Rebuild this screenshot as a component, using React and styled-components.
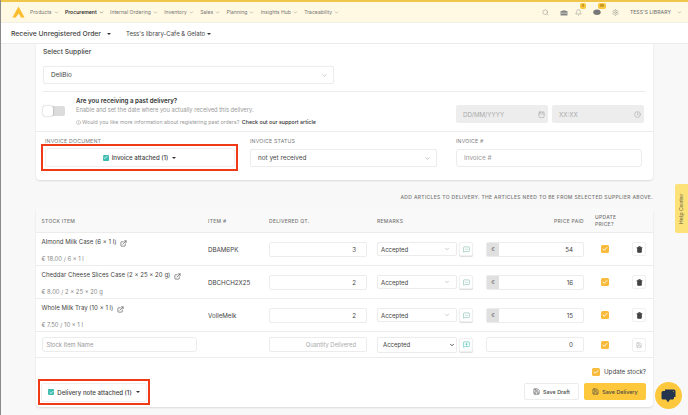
import React from 'react'
import styled, { createGlobalStyle } from 'styled-components'
import {
  Search,
  Bell,
  Settings,
  ChevronDown,
  Calendar,
  Clock,
  Info,
  ExternalLink,
  Check,
  Trash2,
  Save,
  MessageSquarePlus,
  MessageSquareMore,
} from 'lucide-react'

const GlobalStyle = createGlobalStyle`
  html, body {
    margin: 0;
    padding: 0;
    background: #f8f8f8;
  }
  * {
    box-sizing: border-box;
  }
  body {
    font-family: Inter, "Open Sans", sans-serif;
    color: #3c3c3c;
  }
`

const Page = styled.div`
  position: relative;
  width: 688px;
  height: 415px;
  overflow: hidden;
  background: #f8f8f8;
  border-left: 1px solid #8a8a8a;
`

const TopBar = styled.header`
  display: flex;
  align-items: center;
  height: 23px;
  padding: 0 6px 0 11px;
  background: #fff9e3;
  border-top: 2px solid #f0c64a;
  border-bottom: 1px solid #f1efe6;
`

const Nav = styled.nav`
  display: flex;
  align-items: center;
  gap: 6.4px;
  margin-left: 5px;
`

const NavItem = styled.span`
  display: flex;
  align-items: center;
  gap: 2px;
  font-size: 5.1px;
  font-weight: ${(p) => (p.$active ? 600 : 400)};
  color: ${(p) => (p.$active ? '#333' : '#777')};
  white-space: nowrap;
`

const TopIcons = styled.div`
  display: flex;
  align-items: center;
  margin-left: auto;
  color: #888;
`

const IconSlot = styled.span`
  position: relative;
  display: flex;
  justify-content: center;
  width: ${(p) => p.$w}px;
`

const Badge = styled.span`
  position: absolute;
  top: -6px;
  left: ${(p) => p.$left}px;
  min-width: ${(p) => p.$w}px;
  height: 6px;
  padding: 0 1px;
  font-size: 3.5px;
  line-height: 6px;
  text-align: center;
  color: #7a5b00;
  background: #fbc73f;
  border-radius: 2px;
`

const UserName = styled.span`
  display: flex;
  align-items: center;
  gap: 6px;
  margin-left: 8px;
  font-size: 5px;
  font-weight: 500;
  letter-spacing: 0.1px;
  color: #777;
`

const SubBar = styled.div`
  display: flex;
  align-items: center;
  height: 21px;
  padding-left: 10px;
  background: #fff;
  border-bottom: 1px solid #ececec;
`

const SubTitle = styled.span`
  font-size: 6.8px;
  font-weight: 500;
  color: #444;
`

const SubStore = styled.span`
  margin-left: 15px;
  font-size: 6px;
  color: #444;
`

const Caret = styled.span`
  display: inline-block;
  margin-left: ${(p) => p.$gap || 2}px;
  vertical-align: middle;
  border-left: 2px solid transparent;
  border-right: 2px solid transparent;
  border-top: 2px solid #333;
`

const Content = styled.main`
  width: 617px;
  margin-left: 35px;
`

const TopCard = styled.section`
  height: 136px;
  background: #fff;
  border-radius: 0 0 4px 4px;
  box-shadow: 0 1px 2px rgba(0, 0, 0, 0.12);
`

const SupplierBlock = styled.div`
  height: 48px;
  margin: 0 7px;
  padding-top: 4px;
  border-bottom: 1px solid #ececec;
`

const SectionTitle = styled.div`
  height: 18px;
  font-size: 6.7px;
  font-weight: 500;
  color: #444;
`

const SelectBox = styled.div`
  display: flex;
  align-items: center;
  justify-content: space-between;
  width: ${(p) => p.$w}px;
  height: ${(p) => p.$h || 18}px;
  padding: 0 ${(p) => p.$pr || 5}px 0 ${(p) => p.$pl || 7}px;
  font-size: 6.35px;
  color: #444;
  background: #fff;
  border: 1px solid #ececec;
  border-radius: 2px;
  box-shadow: 0 0 1px rgba(0, 0, 0, 0.05);
`

const PastRow = styled.div`
  display: flex;
  height: 40px;
  padding: 5px 9px 0 7px;
  border-bottom: 1px solid #ececec;
`

const Toggle = styled.span`
  position: relative;
  flex: none;
  width: 22px;
  height: 10px;
  margin-top: 9px;
  background: #dcdcdc;
  border-radius: 2px;
`

const ToggleKnob = styled.span`
  position: absolute;
  top: 0;
  left: 0;
  width: 10px;
  height: 10px;
  background: #fff;
  border-radius: 2px;
  box-shadow: 0 0 2px rgba(0, 0, 0, 0.35);
`

const PastText = styled.div`
  margin-left: 11px;
`

const PastTitle = styled.div`
  font-size: 6.2px;
  font-weight: 600;
  line-height: 8px;
  color: #333;
`

const PastHint = styled.div`
  margin-top: 1px;
  font-size: 5.75px;
  line-height: 8px;
  color: #999;
`

const PastLink = styled.div`
  display: flex;
  align-items: center;
  gap: 1px;
  margin-top: 4px;
  font-size: 5.3px;
  line-height: 8px;
  color: #999;
  white-space: pre;
  b {
    font-weight: 500;
    color: #333;
  }
`

const DateFields = styled.div`
  display: flex;
  gap: 4px;
  margin-left: auto;
  padding-top: 8px;
`

const DateField = styled.div`
  display: flex;
  align-items: center;
  justify-content: space-between;
  width: ${(p) => p.$w}px;
  height: 18px;
  padding: 0 3px 0 7px;
  font-size: 6.2px;
  color: #aaa;
  background: #ededed;
  border-radius: 2px;
`

const InvoiceRow = styled.div`
  display: flex;
  padding: 6px 11px 0 9px;
`

const InvoiceCol = styled.div`
  width: ${(p) => p.$w}px;
  margin-right: ${(p) => p.$mr || 0}px;
`

const FieldLabel = styled.div`
  height: 11px;
  font-size: 5.2px;
  line-height: 7px;
  letter-spacing: 0.2px;
  color: #777;
  white-space: nowrap;
`

const AttachBox = styled.div`
  display: flex;
  align-items: center;
  justify-content: center;
  gap: 3px;
  width: ${(p) => p.$w}px;
  height: ${(p) => p.$h}px;
  font-size: 6.1px;
  font-weight: 500;
  color: #444;
  background: #fff;
  border-radius: 2px;
  box-shadow: 0 0 0 1px #efefef;
`

const RedFrame = styled.div`
  display: flex;
  align-items: center;
  justify-content: center;
  width: ${(p) => p.$w}px;
  height: ${(p) => p.$h}px;
  margin: ${(p) => p.$m};
  background: #fff;
  border: 2px solid #f03a17;
`

const TealBox = styled.span`
  display: inline-flex;
  align-items: center;
  justify-content: center;
  width: 6px;
  height: 6px;
  color: #fff;
  background: #3dbdb0;
  border-radius: 1px;
`

const TextField = styled.div`
  display: flex;
  align-items: center;
  height: 18px;
  padding-left: 7px;
  font-size: 6.4px;
  color: #999;
  background: #fff;
  border: 1px solid #ececec;
  border-radius: 3px;
`

const StockNameField = styled(TextField)`
  width: 155px;
  height: 15px;
  padding-left: 4px;
  font-size: 5.8px;
`

const AddNote = styled.p`
  height: 28px;
  margin: 0;
  padding-top: 14px;
  font-size: 5px;
  line-height: 7px;
  font-weight: 500;
  letter-spacing: 0.33px;
  text-align: right;
  color: #777;
  white-space: nowrap;
`

const TableCard = styled.section`
  height: 199px;
  background: #fff;
  border-radius: 4px;
  box-shadow: 0 1px 2px rgba(0, 0, 0, 0.12);
`

const Row = styled.div`
  display: grid;
  grid-template-columns: 166.5px 61px 108px 109px 98px 42px 1fr;
  align-items: center;
  height: ${(p) => p.$h}px;
  padding: ${(p) => (p.$head ? 2 : 0)}px 7px 0 5.5px;
  background: ${(p) => (p.$head ? '#f9f9f9' : '#fff')};
  border-bottom: 1px solid #ececec;
`

const HeadCell = styled.span`
  padding-left: ${(p) => p.$pl || 0}px;
  font-size: 5px;
  line-height: 7px;
  font-weight: 500;
  letter-spacing: 0.28px;
  text-align: ${(p) => p.$align || 'left'};
  color: #777;
`

const ItemCell = styled.div`
  display: flex;
  flex-direction: column;
  gap: 8px;
  padding-top: 3px;
`

const ItemName = styled.div`
  display: flex;
  align-items: flex-start;
  gap: 4px;
  height: 9px;
  font-size: 6.1px;
  line-height: 8px;
  color: #444;
  white-space: nowrap;
  svg {
    margin-top: 2px;
  }
`

const ItemPrice = styled.div`
  font-size: 5.9px;
  line-height: 8px;
  color: #888;
`

const Code = styled.span`
  font-size: 6.2px;
  color: #444;
`

const QtyInput = styled.div`
  display: flex;
  align-items: center;
  justify-content: flex-end;
  width: 98px;
  height: 15px;
  padding-right: 10px;
  font-size: ${(p) => (p.$placeholder ? 5.75 : 6.2)}px;
  color: ${(p) => (p.$placeholder ? '#aaa' : '#444')};
  background: #fff;
  border: 1px solid #ececec;
  border-radius: 2px;
`

const RemarkCell = styled.div`
  display: flex;
  align-items: center;
  gap: 2px;
`

const RemarkSelect = styled(SelectBox)`
  width: 80px;
  height: ${(p) => p.$h || 14}px;
  padding: 0 ${(p) => (p.$native ? 1 : 6)}px 0 ${(p) => (p.$native ? 5 : 3)}px;
  font-size: 6px;
`

const SquareButton = styled.span`
  display: flex;
  align-items: center;
  justify-content: center;
  width: 14px;
  height: 14px;
  color: ${(p) => p.$color || '#333'};
  background: #fff;
  border: 1px solid #f0f0f0;
  border-radius: 2px;
  box-shadow: ${(p) => (p.$raised ? '0 1px 1px rgba(0, 0, 0, 0.14)' : 'none')};
`

const PriceInput = styled.div`
  display: flex;
  align-items: center;
  height: 15px;
  font-size: 6.2px;
  color: #444;
  background: #fff;
  border: 1px solid #ececec;
  border-radius: 2px;
`

const Euro = styled.span`
  display: flex;
  align-items: center;
  justify-content: center;
  width: 12px;
  height: 100%;
  font-size: 5.4px;
  color: #666;
  background: #e0e0e0;
`

const PriceValue = styled.span`
  margin-left: auto;
  padding-right: 10px;
`

const OrangeBox = styled.span`
  display: flex;
  align-items: center;
  justify-content: center;
  width: 8px;
  height: 8px;
  margin: 0 auto;
  color: #fff;
  background: #f8bb3c;
  border-radius: 1.5px;
  flex: none;
`

const TrashSlot = styled.div`
  display: flex;
  justify-content: flex-end;
`

const TableFooter = styled.div`
  display: flex;
  align-items: flex-start;
  justify-content: space-between;
  padding: 0 7px 0 0;
`

const FooterRight = styled.div`
  display: flex;
  flex-direction: column;
  align-items: flex-end;
`

const UpdateStock = styled.label`
  display: flex;
  align-items: center;
  gap: 4px;
  height: 9px;
  margin: 9px 0 7px;
  font-size: 6.2px;
  color: #444;
`

const Actions = styled.div`
  display: flex;
  gap: 5px;
`

const ActionButton = styled.button`
  display: flex;
  align-items: center;
  justify-content: center;
  gap: 3px;
  width: ${(p) => p.$w}px;
  height: 17px;
  padding: 0;
  font-family: inherit;
  font-size: 5.4px;
  font-weight: 500;
  color: #444;
  background: ${(p) => (p.$primary ? '#fdc83c' : '#fff')};
  border: 1px solid ${(p) => (p.$primary ? '#fdc83c' : '#ececec')};
  border-radius: 2px;
`

const HelpTab = styled.div`
  position: absolute;
  top: 184px;
  right: 0;
  display: flex;
  align-items: center;
  justify-content: center;
  width: 13px;
  height: 49px;
  background: #fde27a;
  border-radius: 2px 0 0 2px;
`

const HelpLabel = styled.span`
  font-size: 5.4px;
  color: #5a5a40;
  white-space: nowrap;
  transform: rotate(-90deg);
`

const ChatBubble = styled.div`
  position: absolute;
  top: 382px;
  left: 654px;
  display: flex;
  align-items: center;
  justify-content: center;
  width: 27px;
  height: 27px;
  background: #fdc83c;
  border-radius: 50%;
`

const navItems = [
  'Products',
  'Procurement',
  'Internal Ordering',
  'Inventory',
  'Sales',
  'Planning',
  'Insights Hub',
  'Traceability',
]

const rows = [
  { name: 'Almond Milk Case (6 × 1 l)', price: '€ 18.00 / 6 × 1 l', code: 'DBAM6PK', qty: 3, paid: 54 },
  { name: 'Cheddar Cheese Slices Case (2 × 25 × 20 g)', price: '€ 8.00 / 2 × 25 × 20 g', code: 'DBCHCH2X25', qty: 2, paid: 16 },
  { name: 'Whole Milk Tray (10 × 1 l)', price: '€ 7.50 / 10 × 1 l', code: 'VolleMelk', qty: 2, paid: 15 },
]

const Logo = () => (
  <svg width="13" height="12" viewBox="0 0 13 12">
    <path d="M6.5 0.5 L12.6 11.5 L8.9 11.5 L6.9 7.6 L3.6 11.5 L0.4 11.5 Z" fill="#fbbd2e" />
  </svg>
)

const Basket = () => (
  <svg width="8" height="7" viewBox="0 0 8 7" fill="#888">
    <path d="M2.6 2 V1 H5.4 V2 H4.8 V1.5 H3.2 V2 Z" />
    <rect x="0.5" y="2" width="7" height="4.5" rx="0.6" />
    <rect x="0.5" y="3.8" width="7" height="0.5" fill="#fff9e3" />
  </svg>
)

const CloudIcon = () => (
  <svg width="8" height="6" viewBox="0 0 8 6" fill="#777">
    <ellipse cx="4" cy="3.2" rx="3.7" ry="2.7" />
  </svg>
)

const ChatGlyph = () => (
  <svg width="15" height="14" viewBox="0 0 15 14">
    <path d="M4 0.5 H13 Q14.5 0.5 14.5 2 V8 H13 V2 H4 Z" fill="#23344f" />
    <path d="M2 2 H11.5 Q13 2 13 3.5 V9 Q13 10.5 11.5 10.5 H9 L7 13.3 L5 10.5 H2 Q0.5 10.5 0.5 9 V3.5 Q0.5 2 2 2 Z" fill="#23344f" />
  </svg>
)

const TickBox = () => (
  <OrangeBox>
    <Check size={6} strokeWidth={3.5} />
  </OrangeBox>
)

const App = () => (
  <Page>
    <GlobalStyle />
    <TopBar>
      <Logo />
      <Nav>
        {navItems.map((item) => (
          <NavItem key={item} $active={item === 'Procurement'}>
            {item}
            <ChevronDown size={5} strokeWidth={2} />
          </NavItem>
        ))}
      </Nav>
      <TopIcons>
        <IconSlot $w={20}>
          <Search size={7} strokeWidth={1.6} />
        </IconSlot>
        <IconSlot $w={16}>
          <Basket />
        </IconSlot>
        <IconSlot $w={14}>
          <Bell size={7} strokeWidth={1.6} />
          <Badge $left={8} $w={6}>9</Badge>
        </IconSlot>
        <IconSlot $w={23}>
          <CloudIcon />
          <Badge $left={12} $w={8}>99</Badge>
        </IconSlot>
        <IconSlot $w={13}>
          <Settings size={7} strokeWidth={1.6} />
        </IconSlot>
        <UserName>
          TESS'S LIBRARY
          <ChevronDown size={5} strokeWidth={2} />
        </UserName>
      </TopIcons>
    </TopBar>
    <SubBar>
      <SubTitle>
        Receive Unregistered Order
        <Caret $gap={6} />
      </SubTitle>
      <SubStore>
        Tess's library-Cafe &amp; Gelato
        <Caret />
      </SubStore>
    </SubBar>
    <Content>
      <TopCard>
        <SupplierBlock>
          <SectionTitle>Select Supplier</SectionTitle>
          <SelectBox $w={291}>
            DeliBio
            <ChevronDown size={7} color="#aaa" />
          </SelectBox>
        </SupplierBlock>
        <PastRow>
          <Toggle>
            <ToggleKnob />
          </Toggle>
          <PastText>
            <PastTitle>Are you receiving a past delivery?</PastTitle>
            <PastHint>Enable and set the date where you actually received this delivery.</PastHint>
            <PastLink>
              <Info size={5} />
              Would you like more information about registering past orders? <b>Check out our support article</b>
            </PastLink>
          </PastText>
          <DateFields>
            <DateField $w={92}>
              DD/MM/YYYY
              <Calendar size={7} />
            </DateField>
            <DateField $w={92}>
              XX:XX
              <Clock size={7} />
            </DateField>
          </DateFields>
        </PastRow>
        <InvoiceRow>
          <InvoiceCol $w={188} $mr={17}>
            <FieldLabel>INVOICE DOCUMENT</FieldLabel>
            <RedFrame $w={197} $h={27} $m="-5px 0 0 -4px">
              <AttachBox $w={188} $h={17}>
                <TealBox>
                  <Check size={5} strokeWidth={4} />
                </TealBox>
                Invoice attached (1)
                <Caret $gap={1} />
              </AttachBox>
            </RedFrame>
          </InvoiceCol>
          <InvoiceCol $w={187} $mr={19}>
            <FieldLabel>INVOICE STATUS</FieldLabel>
            <SelectBox $w={187}>
              not yet received
              <ChevronDown size={7} color="#999" />
            </SelectBox>
          </InvoiceCol>
          <InvoiceCol $w={186}>
            <FieldLabel>INVOICE #</FieldLabel>
            <TextField>Invoice #</TextField>
          </InvoiceCol>
        </InvoiceRow>
      </TopCard>
      <AddNote>ADD ARTICLES TO DELIVERY. THE ARTICLES NEED TO BE FROM SELECTED SUPPLIER ABOVE.</AddNote>
      <TableCard>
        <Row $head $h={25}>
          <HeadCell>STOCK ITEM</HeadCell>
          <HeadCell>ITEM #</HeadCell>
          <HeadCell>DELIVERED QT.</HeadCell>
          <HeadCell>REMARKS</HeadCell>
          <HeadCell $align="right">PRICE PAID</HeadCell>
          <HeadCell $pl={11}>
            UPDATE
            <br />
            PRICE?
          </HeadCell>
          <span />
        </Row>
        {rows.map((row) => (
          <Row key={row.code} $h={33}>
            <ItemCell>
              <ItemName>
                {row.name}
                <ExternalLink size={7} />
              </ItemName>
              <ItemPrice>{row.price}</ItemPrice>
            </ItemCell>
            <Code>{row.code}</Code>
            <QtyInput>{row.qty}</QtyInput>
            <RemarkCell>
              <RemarkSelect>
                Accepted
                <ChevronDown size={6} color="#999" />
              </RemarkSelect>
              <SquareButton $raised $color="#7fb8ae">
                <MessageSquareMore size={7} />
              </SquareButton>
            </RemarkCell>
            <PriceInput>
              <Euro>€</Euro>
              <PriceValue>{row.paid}</PriceValue>
            </PriceInput>
            <TickBox />
            <TrashSlot>
              <SquareButton>
                <Trash2 size={7} fill="#444" />
              </SquareButton>
            </TrashSlot>
          </Row>
        ))}
        <Row $h={26}>
          <StockNameField>Stock Item Name</StockNameField>
          <span />
          <QtyInput $placeholder>Quantity Delivered</QtyInput>
          <RemarkCell>
            <RemarkSelect $h={16} $native>
              Accepted
              <ChevronDown size={6} color="#222" strokeWidth={3} />
            </RemarkSelect>
            <SquareButton $raised $color="#3dbdb0">
              <MessageSquarePlus size={7} />
            </SquareButton>
          </RemarkCell>
          <PriceInput>
            <PriceValue>0</PriceValue>
          </PriceInput>
          <TickBox />
          <TrashSlot>
            <SquareButton $color="#aaa">
              <Save size={6} />
            </SquareButton>
          </TrashSlot>
        </Row>
        <TableFooter>
          <RedFrame $w={112} $h={26} $m="21px 0 0 2px">
            <AttachBox $w={104} $h={17}>
              <TealBox>
                <Check size={5} strokeWidth={4} />
              </TealBox>
              Delivery note attached (1)
              <Caret $gap={1} />
            </AttachBox>
          </RedFrame>
          <FooterRight>
            <UpdateStock>
              <TickBox />
              Update stock?
            </UpdateStock>
            <Actions>
              <ActionButton $w={55}>
                <Save size={7} />
                Save Draft
              </ActionButton>
              <ActionButton $w={62} $primary>
                <Save size={7} />
                Save Delivery
              </ActionButton>
            </Actions>
          </FooterRight>
        </TableFooter>
      </TableCard>
    </Content>
    <HelpTab>
      <HelpLabel>Help Center</HelpLabel>
    </HelpTab>
    <ChatBubble>
      <ChatGlyph />
    </ChatBubble>
  </Page>
)

export default App
